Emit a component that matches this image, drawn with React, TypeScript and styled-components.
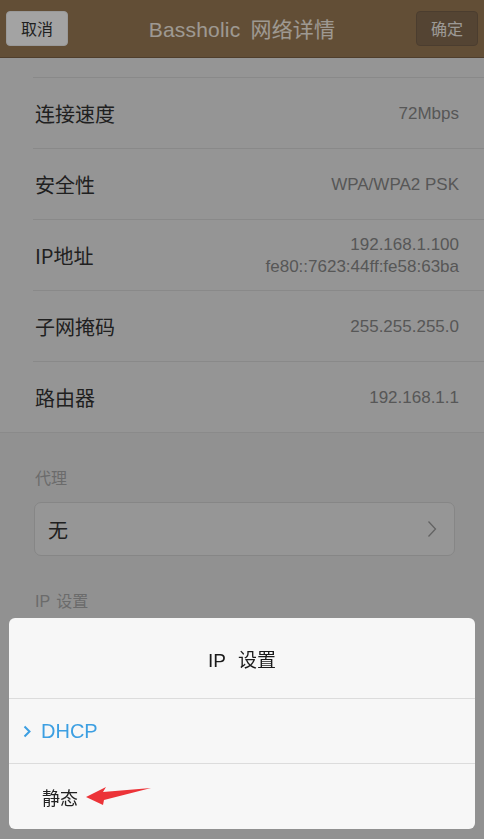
import React from "react";
import styled, { createGlobalStyle } from "styled-components";

const GlobalStyle = createGlobalStyle`
  html, body {
    margin: 0;
    padding: 0;
    background: #e3e3e3;
  }
  body {
    font-family: "Liberation Sans", "Noto Sans CJK SC", sans-serif;
  }
`;

const Page = styled.div`
  min-height: 100vh;
  background: #e3e3e3;
  display: flex;
  flex-direction: column;
`;

const Header = styled.header`
  height: 58px;
  box-sizing: border-box;
  background: #9a7b55;
  border-bottom: 1px solid #7c6245;
  display: flex;
  align-items: center;
  justify-content: space-between;
  padding: 0 6px;
`;

const HeaderButton = styled.button<{ $primary?: boolean }>`
  width: 62px;
  height: 35px;
  margin-top: -1px;
  border-radius: 4px;
  border: 1px solid ${(p) => (p.$primary ? "#76604a" : "#f0f0f0")};
  background: ${(p) => (p.$primary ? "#846b51" : "#ffffff")};
  color: ${(p) => (p.$primary ? "#f4f0ea" : "#333333")};
  font-family: "Noto Sans CJK SC", sans-serif;
  font-size: 16px;
  padding: 0;
`;

const Title = styled.h1`
  margin: 0 0 1px 0;
  font-weight: normal;
  font-size: 21px;
  color: #f7efe4;
  word-spacing: 4px;
  letter-spacing: 0.2px;
`;

const InfoList = styled.section`
  background: #eaeaea;
  padding-top: 19px;
  border-bottom: 1px solid #d8d8d8;
`;

const InfoRow = styled.div`
  height: 71px;
  box-sizing: border-box;
  margin-left: 33px;
  padding: 0 25px 0 2px;
  border-top: 1px solid #d6d6d6;
  display: flex;
  align-items: center;
  justify-content: space-between;
`;

const Label = styled.span`
  font-family: "Noto Sans CJK SC", sans-serif;
  font-size: 20px;
  color: #333333;
`;

const Values = styled.div`
  display: flex;
  flex-direction: column;
  align-items: flex-end;
  gap: 3px;
  font-size: 17px;
  color: #888888;
  line-height: 19px;
`;

const Settings = styled.section`
  display: flex;
  flex-direction: column;
  padding: 36px 29px 0 34px;
`;

const SectionLabel = styled.div`
  font-family: "Liberation Sans", "Noto Sans CJK SC", sans-serif;
  font-size: 16px;
  line-height: 20px;
  color: #a8a8a8;
  padding-left: 1px;
  word-spacing: 2px;
`;

const SelectBox = styled.div`
  margin: 13px 0 36px;
  height: 54px;
  box-sizing: border-box;
  border: 1px solid #d2d2d2;
  border-radius: 7px;
  background: #ebebeb;
  display: flex;
  align-items: center;
  justify-content: space-between;
  padding: 0 17px 0 13px;
  font-family: "Noto Sans CJK SC", sans-serif;
  font-size: 20px;
  color: #333333;
`;

const Dim = styled.div`
  position: fixed;
  inset: 0;
  background: rgba(0, 0, 0, 0.36);
`;

const Sheet = styled.div`
  position: fixed;
  left: 9px;
  right: 9px;
  bottom: 10px;
  background: #f7f7f7;
  border-radius: 6px;
  overflow: hidden;
  display: flex;
  flex-direction: column;
`;

const SheetTitle = styled.div`
  height: 80px;
  display: flex;
  align-items: center;
  justify-content: center;
  font-size: 19px;
  color: #1a1a1a;
  word-spacing: 7px;
  padding-top: 1px;
  box-sizing: border-box;
`;

const Option = styled.div<{ $active?: boolean }>`
  position: relative;
  height: ${(p) => (p.$active ? "65px" : "66px")};
  box-sizing: border-box;
  border-top: 1px solid #dcdcdc;
  display: flex;
  align-items: center;
  gap: 10px;
  padding-left: ${(p) => (p.$active ? "14px" : "33px")};
  font-size: ${(p) => (p.$active ? "20px" : "18px")};
  color: ${(p) => (p.$active ? "#3c9fe2" : "#222222")};
`;

const Annotation = styled.svg`
  position: absolute;
  left: 75px;
  top: 21px;
`;

const rows: { label: string; values: string[] }[] = [
  { label: "连接速度", values: ["72Mbps"] },
  { label: "安全性", values: ["WPA/WPA2 PSK"] },
  { label: "IP地址", values: ["192.168.1.100", "fe80::7623:44ff:fe58:63ba"] },
  { label: "子网掩码", values: ["255.255.255.0"] },
  { label: "路由器", values: ["192.168.1.1"] },
];

export default function App() {
  return (
    <Page>
      <GlobalStyle />
      <Header>
        <HeaderButton>取消</HeaderButton>
        <Title>Bassholic 网络详情</Title>
        <HeaderButton $primary>确定</HeaderButton>
      </Header>
      <InfoList>
        {rows.map((r) => (
          <InfoRow key={r.label}>
            <Label>{r.label}</Label>
            <Values>
              {r.values.map((v) => (
                <span key={v}>{v}</span>
              ))}
            </Values>
          </InfoRow>
        ))}
      </InfoList>
      <Settings>
        <SectionLabel>代理</SectionLabel>
        <SelectBox>
          <span>无</span>
          <svg width="10" height="18" viewBox="0 0 10 18">
            <polyline points="1.5,1.5 8.5,9 1.5,16.5" fill="none" stroke="#9a9a9a" strokeWidth="1.3" />
          </svg>
        </SelectBox>
        <SectionLabel>IP 设置</SectionLabel>
      </Settings>
      <Dim />
      <Sheet>
        <SheetTitle>IP 设置</SheetTitle>
        <Option $active>
          <svg width="8" height="13" viewBox="0 0 8 13">
            <polyline points="1.5,1.5 6.5,6.5 1.5,11.5" fill="none" stroke="#3c9fe2" strokeWidth="2" />
          </svg>
          DHCP
        </Option>
        <Option>
          静态
          <Annotation width="70" height="24" viewBox="0 0 70 24">
            <polygon points="2,12 22,2 19,7 67,3 20,15 19,20" fill="#ec3338" />
          </Annotation>
        </Option>
      </Sheet>
    </Page>
  );
}
